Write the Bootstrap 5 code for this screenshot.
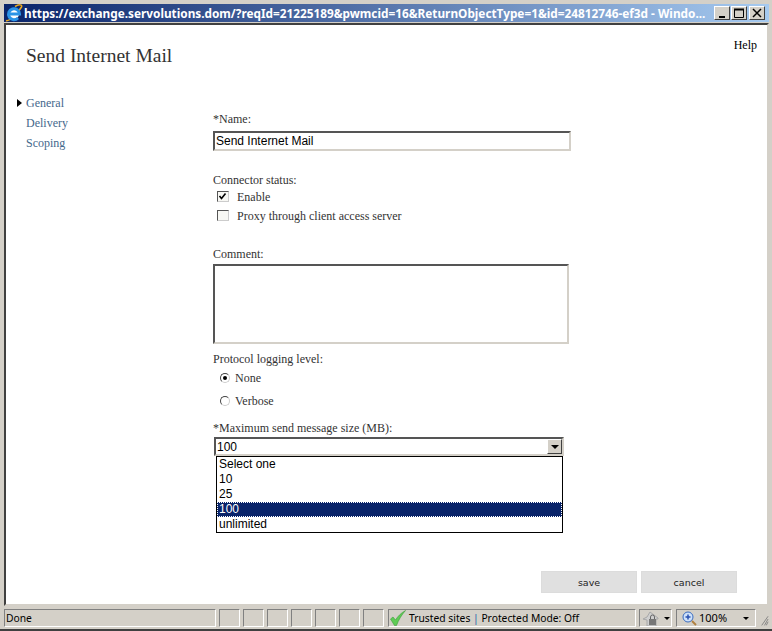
<!DOCTYPE html>
<html lang="en">
<head>
  <meta charset="UTF-8" />
  <title>Send Internet Mail</title>
  <link href="https://cdn.jsdelivr.net/npm/bootstrap@5.3.3/dist/css/bootstrap.min.css" rel="stylesheet">
  <style>
    html, body { height: 631px; overflow: hidden; }
    body { background: #d4d0c8; font-family: "Liberation Serif", serif; font-size: 12px; color: #333; line-height: 14px; }
    .win-frame { width: 772px; height: 631px; padding: 4px 3px 2px 4px; border-bottom: 2px solid #404040; }
    .title-strip { height: 18px; background: linear-gradient(90deg, #0a246a, #a6caf0); color: #fff; font: bold 11.8px "Noto Sans", sans-serif; white-space: nowrap; }
    .title-text { width: 691px; flex: none; padding-left: 1px; }
    .cap-btn { width: 16px; height: 14px; background: #d4d0c8; border: 1px solid; border-color: #fff #404040 #404040 #fff; color: #000; margin-right: 1px; }
    .cap-last { margin-left: 1px; }
    .page-pane { height: 583px; margin-top: 1px; background: #fff; border: 2px solid; border-color: #404040 #d4d0c8 #d4d0c8 #404040; position: relative; }
    .page-help { position: absolute; top: 13px; right: 10px; color: #000; }
    .page-title { font: 400 19.5px/22px "Liberation Serif", serif; color: #333; padding: 20px 0 0 20px; height: 65px; margin: 0; }
    .side-nav { width: 207px; padding-left: 20px; padding-top: 6px; color: #45688c; }
    .side-item { height: 20px; position: relative; }
    .side-arrow { position: absolute; left: -9px; top: 3px; border-left: 5px solid #000; border-top: 4px solid transparent; border-bottom: 4px solid transparent; }
    .form-col { padding-top: 22px; }
    .win-input { display: block; width: 358px; height: 20px; padding: 1px; margin-top: 5px; border: 2px solid; border-color: #555 #d4d0c8 #d4d0c8 #555; font: 12px "Liberation Sans", sans-serif; color: #000; border-radius: 0; outline: 0; }
    .win-area { width: 356px; height: 80px; margin-top: 3px; border: 2px solid; border-color: #555 #d4d0c8 #d4d0c8 #555; border-radius: 0; resize: none; }
    .lbl-row { height: 14px; }
    .chk-row { height: 19px; padding-left: 4px; gap: 8px; align-items: center; display: flex; }
    .chk-box { width: 12px; height: 11px; border: 1px solid; border-color: #555 #ccc #ccc #555; flex: none; background: #f8f8f4; }
    .radio-row { padding-left: 7px; gap: 5px; display: flex; align-items: center; height: 23px; }
    .radio-dot { width: 10px; height: 10px; border-radius: 50%; border: 1px solid; border-color: #444 #ccc #ccc #444; background: #fff; flex: none; position: relative; }
    .radio-on::after { content: ""; position: absolute; left: 2px; top: 2px; width: 4px; height: 4px; border-radius: 50%; background: #000; }
    .select-wrap { position: relative; width: 350px; margin: 2px 0 0 1px; }
    .win-select { height: 19px; border: 2px solid; border-color: #555 #d4d0c8 #d4d0c8 #555; font: 12px/15px "Liberation Sans", sans-serif; color: #000; padding: 1px 0 0 1px; display: flex; justify-content: space-between; }
    .sel-arrow { width: 15px; height: 15px; margin-top: -1px; background: #d4d0c8; border: 1px solid; border-color: #fff #404040 #404040 #fff; display: flex; align-items: center; justify-content: center; }
    .sel-arrow i { border-top: 4px solid #000; border-left: 4px solid transparent; border-right: 4px solid transparent; }
    .sel-menu { position: absolute; top: 19px; left: 2px; width: 347px; border: 1px solid #000; background: #fff; font: 12px/15px "Liberation Sans", sans-serif; color: #000; z-index: 5; }
    .sel-opt { height: 15px; padding-left: 2px; }
    .sel-on { background: #0a246a; color: #fff; outline: 1px dotted #fff; outline-offset: -1px; }
    .foot-btns { position: absolute; top: 546px; right: 30px; gap: 4px; }
    .page-btn { width: 96px; height: 22px; padding: 0; background: #e0e0e0; border: 1px solid #dcdcdc; border-radius: 0; font: 9.5px "DejaVu Sans", sans-serif; color: #222; }
    .status-strip { height: 20px; margin-top: 1px; padding-top: 2px; font: 10.3px/16px "Noto Sans", sans-serif; color: #000; gap: 3px; }
    .st-cell { height: 18px; border: 1px solid; border-color: #808080 #fff #fff #808080; padding-left: 1px; white-space: nowrap; flex: none; }
    .st-small { width: 21px; }
    .st-trust { width: 248px; margin-left: 1px; gap: 3px; }
    .st-lock { width: 33px; padding-left: 2px; gap: 4px; }
    .st-zoom { width: 80px; margin-left: 1px; padding-left: 5px; gap: 2px; font-size: 11px; }
    .st-sep { color: #1c5fa8; }
    .st-arrow { border-top: 3px solid #000; border-left: 3px solid transparent; border-right: 3px solid transparent; }
    .st-arrow-far { margin-left: 14px; }
  </style>
</head>
<body>
  <div class="win-frame d-flex flex-column">
    <div class="title-strip d-flex align-items-center">
      <svg width="19" height="18" viewBox="0 0 19 18" class="flex-shrink-0">
        <path d="M2 16.500C5 18 14 9 17.500 3 18.500 0.500 15 0 11 2.500" fill="none" stroke="#e8a820" stroke-width="1.500"/>
        <circle cx="10" cy="10" r="5" fill="#fff"/>
        <path d="M4.500 10H15.500A5.500 5.500 0 1 0 14 14" fill="none" stroke="#2a93e6" stroke-width="3"/>
      </svg>
      <div class="title-text">https://exchange.servolutions.dom/?reqId=21225189&amp;pwmcid=16&amp;ReturnObjectType=1&amp;id=24812746-ef3d - Windo...</div>
      <div class="cap-btn d-flex align-items-end justify-content-center"><svg width="10" height="10"><rect x="2" y="7" width="6" height="2"/></svg></div>
      <div class="cap-btn d-flex align-items-center justify-content-center"><svg width="10" height="10"><path d="M0.500 1.500h9v8h-9z M0 1h10v1H0z" fill="none" stroke="#000"/></svg></div>
      <div class="cap-btn cap-last d-flex align-items-center justify-content-center"><svg width="10" height="10"><path d="M1 1l8 8M9 1l-8 8" stroke="#000" stroke-width="1.500"/></svg></div>
    </div>

    <div class="page-pane">
      <div class="page-help">Help</div>
      <h1 class="page-title">Send Internet Mail</h1>
      <div class="d-flex">
        <div class="side-nav">
          <div class="side-item"><span class="side-arrow"></span>General</div>
          <div class="side-item">Delivery</div>
          <div class="side-item">Scoping</div>
        </div>
        <div class="form-col">
          <div class="lbl-row">*Name:</div>
          <input class="win-input" type="text" value="Send Internet Mail">
          <div class="lbl-row" style="margin-top:22px">Connector status:</div>
          <div class="chk-row">
            <span class="chk-box d-flex"><svg width="10" height="9"><path d="M1.500 4l2 2.500 4-5" fill="none" stroke="#000" stroke-width="1.600"/></svg></span>Enable
          </div>
          <div class="chk-row">
            <span class="chk-box"></span>Proxy through client access server
          </div>
          <div class="lbl-row" style="margin-top:22px">Comment:</div>
          <textarea class="win-area d-block"></textarea>
          <div class="lbl-row" style="margin-top:8px">Protocol logging level:</div>
          <div class="radio-row"><span class="radio-dot radio-on"></span>None</div>
          <div class="radio-row"><span class="radio-dot"></span>Verbose</div>
          <div class="lbl-row" style="margin-top:9px">*Maximum send message size (MB):</div>
          <div class="select-wrap">
            <div class="win-select">100<span class="sel-arrow"><i></i></span></div>
            <div class="sel-menu">
              <div class="sel-opt">Select one</div>
              <div class="sel-opt">10</div>
              <div class="sel-opt">25</div>
              <div class="sel-opt sel-on">100</div>
              <div class="sel-opt">unlimited</div>
            </div>
          </div>
        </div>
      </div>
      <div class="foot-btns d-flex">
        <button class="btn page-btn">save</button>
        <button class="btn page-btn">cancel</button>
      </div>
    </div>

    <div class="status-strip d-flex">
      <div class="st-cell" style="width:212px">Done</div>
      <div class="st-cell st-small"></div>
      <div class="st-cell st-small"></div>
      <div class="st-cell st-small"></div>
      <div class="st-cell st-small"></div>
      <div class="st-cell st-small"></div>
      <div class="st-cell st-small"></div>
      <div class="st-cell st-small"></div>
      <div class="st-cell st-trust d-flex align-items-center">
        <svg width="16" height="16" viewBox="0 0 16 16"><path d="M0.500 9l2.500-2 2.500 3C8 6 11 3 15.500 0.500 11.500 5 8.500 10 6.500 15.500H4.500z" fill="#5fcb55" stroke="#3d9e3a" stroke-width="0.600"/></svg>
        <span>Trusted sites <span class="st-sep">|</span> Protected Mode: Off</span>
      </div>
      <div class="st-cell st-lock d-flex align-items-center">
        <svg width="18" height="15" viewBox="0 0 18 15"><path d="M1 8l4-2 3-5 8 6v1h-2v7H5V9z" fill="#cfcfcf" stroke="#a8a8a8"/><rect x="7" y="8" width="7" height="6" fill="#777"/><path d="M8.500 8V6a2 2 0 0 1 4 0v2" fill="none" stroke="#666"/></svg>
        <i class="st-arrow"></i>
      </div>
      <div class="st-cell st-zoom d-flex align-items-center">
        <svg width="15" height="15" viewBox="0 0 15 15"><circle cx="6" cy="6" r="5" fill="#cfe2fa" stroke="#3a6cc0"/><path d="M3.500 6h5M6 3.500v5" stroke="#2a50b0" stroke-width="1.500"/><path d="M10 10l4 4" stroke="#b08040" stroke-width="2"/></svg>100%
        <i class="st-arrow st-arrow-far"></i>
      </div>
      <svg width="11" height="16" viewBox="0 0 11 16" class="align-self-end"><path d="M10 5L3 15M10 8L6 15M10 11L8 15" stroke="#808080" fill="none"/></svg>
    </div>
  </div>
</body>
</html>
